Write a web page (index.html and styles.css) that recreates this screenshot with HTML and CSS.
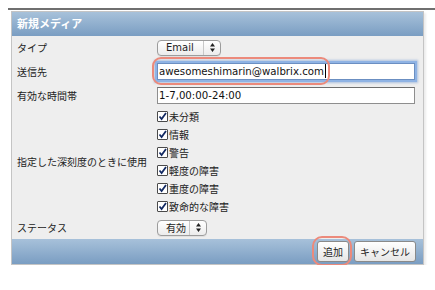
FILE: index.html
```html
<!DOCTYPE html>
<html lang="ja">
<head>
    <meta charset="utf-8">
    <title>新規メディア</title>
    <link rel="stylesheet" href="styles.css">
</head>
<body>
    <div class="topline"></div>
    <div class="dialog">
        <div class="dialog-header">新規メディア</div>

        <div class="dialog-body">
            <div class="row row-type">
                <div class="row-label">タイプ</div>
                <div class="row-field">
                    <span class="select select-type">
                        <span class="select-text">Email</span>
                        <span class="select-arrows">
                            <svg width="5" height="9" viewBox="0 0 5 9"><path d="M2.5 0 L5 3.5 L0 3.5 Z M2.5 9 L5 5.5 L0 5.5 Z" fill="#222"/></svg>
                        </span>
                    </span>
                </div>
            </div>

            <div class="row row-to">
                <div class="row-label">送信先</div>
                <div class="row-field">
                    <div class="text-input focused">awesomeshimarin@walbrix.com<span class="caret"></span></div>
                </div>
            </div>

            <div class="row row-time">
                <div class="row-label">有効な時間帯</div>
                <div class="row-field">
                    <div class="text-input">1-7,00:00-24:00</div>
                </div>
            </div>

            <div class="row row-severity">
                <div class="row-label">指定した深刻度のときに使用</div>
                <div class="row-field check-list">
                    <div class="check-item"><span class="check"></span>未分類</div>
                    <div class="check-item"><span class="check"></span>情報</div>
                    <div class="check-item"><span class="check"></span>警告</div>
                    <div class="check-item"><span class="check"></span>軽度の障害</div>
                    <div class="check-item"><span class="check"></span>重度の障害</div>
                    <div class="check-item"><span class="check"></span>致命的な障害</div>
                </div>
            </div>

            <div class="row row-status">
                <div class="row-label">ステータス</div>
                <div class="row-field">
                    <span class="select select-status">
                        <span class="select-text">有効</span>
                        <span class="select-arrows">
                            <svg width="5" height="9" viewBox="0 0 5 9"><path d="M2.5 0 L5 3.5 L0 3.5 Z M2.5 9 L5 5.5 L0 5.5 Z" fill="#222"/></svg>
                        </span>
                    </span>
                </div>
            </div>
        </div>

        <div class="dialog-footer">
            <button class="btn">追加</button>
            <button class="btn">キャンセル</button>
        </div>

        <!-- annotation marks -->
        <div class="mark mark-to"></div>
        <div class="mark mark-add"></div>
    </div>
</body>
</html>
```

FILE: styles.css
```css
body {
    margin: 0;
    background-color: #ffffff;
    font-family: "Noto Sans CJK JP", sans-serif;
    font-size: 10px;
    color: #222;
}
.topline {
    height: 2px;
    margin: 8px 0 0 8px;
    background-color: #6f6f6f;
}
.dialog {
    position: relative;
    width: 411px;
    margin: 1px 0 0 11px;
    border: 1px solid #c4c4c4;
    background-color: #eeeeee;
    box-shadow: 2px 2px 2px rgba(0, 0, 0, 0.08);
}
.dialog-header {
    height: 24px;
    line-height: 23px;
    padding-left: 5px;
    background: linear-gradient(#a7c1da, #7a9dc2);
    color: #ffffff;
    font-weight: bold;
    font-size: 11px;
}
.row {
    display: flex;
    align-items: center;
}
.row-label {
    width: 140px;
    padding-left: 5px;
}
.row-field {
    flex: 1;
}
.row-type {
    height: 22px;
}
.row-to {
    height: 26px;
}
.row-time {
    height: 23px;
}
.row-severity {
    height: 109px;
}
.row-status {
    height: 23px;
}
.select {
    display: inline-flex;
    align-items: stretch;
    height: 14px;
    border: 1px solid #9c9c9c;
    border-radius: 4px;
    background: linear-gradient(#ffffff, #ececec);
    box-shadow: 0 1px 0 rgba(0, 0, 0, 0.06);
    font-family: "DejaVu Sans", "Noto Sans CJK JP", sans-serif;
    font-size: 10px;
    line-height: 14px;
}
.select-text {
    box-sizing: border-box;
    padding-left: 8px;
    border-right: 1px solid #c8c8c8;
}
.select-type .select-text {
    width: 46px;
}
.select-status .select-text {
    width: 32px;
    font-family: "Noto Sans CJK JP", sans-serif;
}
.select-arrows {
    display: flex;
    align-items: center;
    justify-content: center;
    width: 16px;
}
.text-input {
    position: relative;
    box-sizing: border-box;
    width: 258px;
    height: 17px;
    padding-left: 1px;
    border: 1px solid #8e8e8e;
    border-top-color: #6e6e6e;
    background-color: #ffffff;
    font-family: "DejaVu Sans", sans-serif;
    font-size: 10.2px;
    line-height: 15px;
    color: #111;
}
.text-input.focused {
    border-color: #6b8fc2;
    box-shadow: 0 0 0 2px #8fb3e4, 0 0 2px 3px rgba(110, 150, 210, 0.5);
}
.caret {
    display: inline-block;
    width: 1px;
    height: 14px;
    margin-left: 1px;
    vertical-align: -3px;
    background-color: #000;
}
.check-list {
    display: flex;
    flex-direction: column;
}
.check-item {
    display: flex;
    align-items: center;
    height: 18px;
}
.check {
    box-sizing: border-box;
    width: 11px;
    height: 11px;
    margin-right: 1px;
    border: 1px solid #4a4a4a;
    border-radius: 1px;
    background: #ffffff url("data:image/svg+xml;utf8,<svg xmlns='http://www.w3.org/2000/svg' width='9' height='9' viewBox='0 0 9 9'><path d='M1.5 4.5 L3.6 7 L8 1' fill='none' stroke='%23132a63' stroke-width='1.8'/></svg>") no-repeat center;
}
.dialog-footer {
    display: flex;
    justify-content: flex-end;
    gap: 5px;
    height: 25px;
    padding: 2px 7px 0 0;
    box-sizing: border-box;
    background: linear-gradient(#a7c1da, #7a9dc2);
}
.btn {
    height: 21px;
    padding: 0 5px;
    border: 1px solid #8a8a8a;
    border-radius: 3px;
    background: linear-gradient(#ffffff, #e6e6e6);
    font-family: "Noto Sans CJK JP", sans-serif;
    font-size: 10px;
    color: #222;
}
.mark {
    position: absolute;
    border: 2px solid #ec8a7b;
    border-radius: 9px;
}
.mark-to {
    left: 140px;
    top: 45px;
    width: 174px;
    height: 24px;
}
.mark-add {
    left: 300px;
    top: 224px;
    width: 36px;
    height: 26px;
    border-radius: 10px;
}
```
